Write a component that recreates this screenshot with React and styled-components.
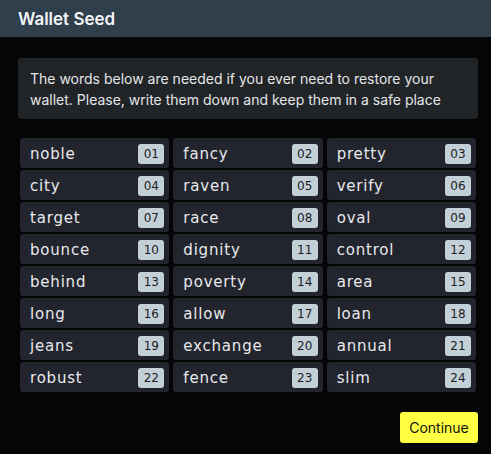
import React from 'react';
import styled, { createGlobalStyle } from 'styled-components';

const GlobalStyle = createGlobalStyle`
  body {
    margin: 0;
    background: #050505;
    font-family: Inter, "Liberation Sans", sans-serif;
  }
`;

const Page = styled.div`
  width: 491px;
  height: 454px;
  background: #050505;
  display: flex;
  flex-direction: column;
`;
const Header = styled.div`
  height: 37px;
  background: #2f3f4b;
  display: flex;
  align-items: center;
  padding: 0 18px;
  color: #f2f4f6;
  font-size: 17px;
  font-weight: 600;
`;
const Body = styled.div`
  padding: 21px 13px 0 18px;
  display: flex;
  flex-direction: column;
`;
const Notice = styled.div`
  background: #212427;
  border-radius: 3px;
  padding: 10px 12px 9px 12px;
  color: #e4e6e8;
  font-size: 14px;
  line-height: 21px;
`;
const Grid = styled.div`
  margin: 19px 2px 0 2px;
  display: grid;
  grid-template-columns: repeat(3, 1fr);
  column-gap: 4px;
  row-gap: 2px;
`;
const Cell = styled.div`
  height: 30px;
  background: #23252e;
  border-radius: 3px;
  display: flex;
  align-items: center;
  justify-content: space-between;
  padding: 1px 5px 0 10px;
  box-sizing: border-box;
`;
const Word = styled.span`
  font-family: "DejaVu Sans", sans-serif;
  font-size: 15px;
  letter-spacing: 0.8px;
  color: #e8e9ec;
`;
const Badge = styled.span`
  width: 26px;
  height: 20px;
  border-radius: 3px;
  background: #c3d0d8;
  color: #1b1d22;
  font-family: "DejaVu Sans", sans-serif;
  font-size: 12px;
  display: flex;
  align-items: center;
  justify-content: center;
`;
const Footer = styled.div`
  display: flex;
  justify-content: flex-end;
  margin-top: 20px;
`;
const Button = styled.button`
  width: 78px;
  height: 31px;
  border: none;
  border-radius: 3px;
  background: #ffff44;
  color: #111;
  font-family: Inter, "Liberation Sans", sans-serif;
  font-size: 14px;
  padding: 0;
`;

const words = [
  'noble', 'fancy', 'pretty',
  'city', 'raven', 'verify',
  'target', 'race', 'oval',
  'bounce', 'dignity', 'control',
  'behind', 'poverty', 'area',
  'long', 'allow', 'loan',
  'jeans', 'exchange', 'annual',
  'robust', 'fence', 'slim',
];

export default function App() {
  return (
    <Page>
      <GlobalStyle />
      <Header>Wallet Seed</Header>
      <Body>
        <Notice>
          The words below are needed if you ever need to restore your wallet. Please, write them down and keep them in a safe place
        </Notice>
        <Grid>
          {words.map((w, i) => (
            <Cell key={w}>
              <Word>{w}</Word>
              <Badge>{String(i + 1).padStart(2, '0')}</Badge>
            </Cell>
          ))}
        </Grid>
        <Footer>
          <Button>Continue</Button>
        </Footer>
      </Body>
    </Page>
  );
}
